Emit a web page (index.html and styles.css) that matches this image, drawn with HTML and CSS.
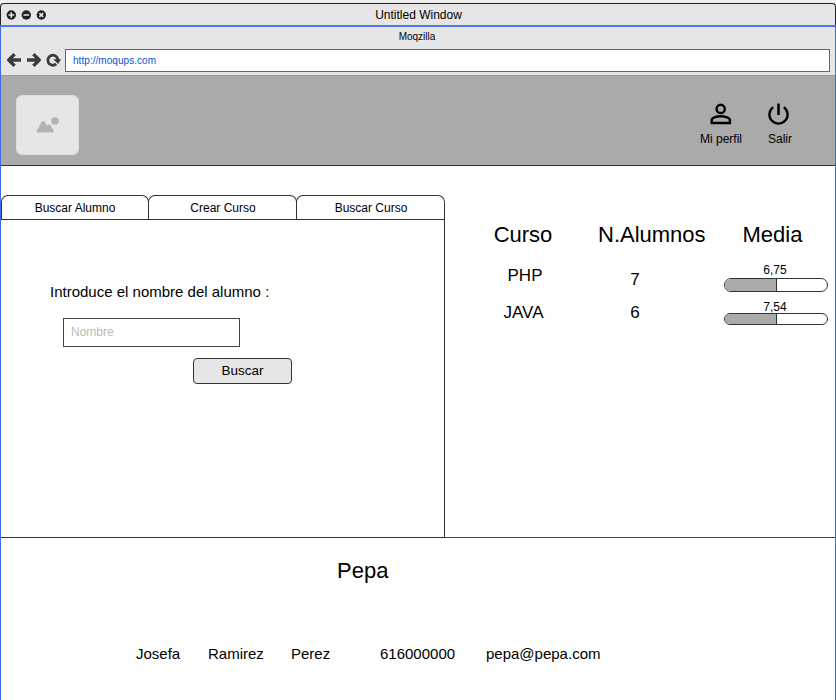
FILE: index.html
```
<!DOCTYPE html>
<html lang="es">
<head>
<meta charset="utf-8">
<title>Untitled Window</title>
<link rel="stylesheet" href="styles.css">
</head>
<body>
<div class="titlebar">
  <svg class="controls" width="42" height="12" viewBox="0 0 42 12">
    <g fill="#222">
      <circle cx="6.3" cy="6" r="4.7"/><circle cx="21.3" cy="6" r="4.7"/><circle cx="36.3" cy="6" r="4.7"/>
    </g>
    <path d="M3.5 6H9.1M6.3 3.2V8.8M18.5 6H24.1M34.4 4.1L38.2 7.9M38.2 4.1L34.4 7.9" stroke="#e6e6e6" stroke-width="1.6"/>
  </svg>
  <span class="window-title">Untitled Window</span>
</div>
<div class="browser">
  <div class="chrome">
    <div class="page-title">Moqzilla</div>
    <div class="toolbar">
      <svg class="nav" width="56" height="16" viewBox="0 0 56 16">
        <g fill="none" stroke="#3b3b3b" stroke-width="3.3" stroke-linejoin="round">
          <path d="M2.6 7H15M8.6 1.1L2.7 7L8.6 12.9"/>
          <path d="M21 7H33.4M27.4 1.1L33.3 7L27.4 12.9"/>
          <path d="M51.8 7.5A5 5 0 1 0 50.2 10.9" stroke-width="2.8"/>
        </g>
        <path d="M47.2 6.2H55L52.2 11Z" fill="#3b3b3b"/>
      </svg>
      <div class="address">http://moqups.com</div>
    </div>
  </div>
  <header class="header">
    <div class="logo">
      <svg width="24" height="17" viewBox="0 0 24 17">
        <path d="M2 15.5Q0 15.5 .8 13.8L5.2 5.5Q7 2.5 8.8 5.2L11 8.8L12 7.9Q13.7 6.8 14.8 8.6L17.6 13.5Q18.5 15.5 16.8 15.5Z" fill="#b3b3b3"/>
        <circle cx="19" cy="4" r="3.8" fill="#b3b3b3"/>
      </svg>
    </div>
    <nav class="actions">
      <div class="action profile">
        <svg width="22" height="22" viewBox="0 0 22 22" fill="none" stroke="#000" stroke-width="2.4">
          <circle cx="10.7" cy="5.9" r="4.1"/>
          <path d="M1.7 20V17C1.7 14.8 6.3 13.2 10.7 13.2S19.9 14.8 19.9 17V20Z"/>
        </svg>
        <span>Mi perfil</span>
      </div>
      <div class="action exit">
        <svg width="22" height="22" viewBox="0 0 22 22" fill="none" stroke="#000" stroke-width="2.3">
          <path d="M9.5 .5V12" stroke-width="2.5"/>
          <path d="M4.2 4.1A9.1 9.1 0 1 0 14.8 4.1"/>
        </svg>
        <span>Salir</span>
      </div>
    </nav>
  </header>
  <main class="main">
    <section class="search">
      <div class="tabs">
        <div class="tab">Buscar Alumno</div>
        <div class="tab">Crear Curso</div>
        <div class="tab">Buscar Curso</div>
      </div>
      <div class="panel">
        <label class="label" for="nombre">Introduce el nombre del alumno :</label>
        <input class="field" id="nombre" placeholder="Nombre">
        <button class="submit">Buscar</button>
      </div>
    </section>
    <section class="courses">
      <div class="heading h-course">Curso</div>
      <div class="heading h-count">N.Alumnos</div>
      <div class="heading h-avg">Media</div>
      <div class="cell php">PHP</div>
      <div class="cell count first">7</div>
      <div class="meter"><span class="score">6,75</span><div class="bar tall"><div class="fill"></div></div></div>
      <div class="cell java">JAVA</div>
      <div class="cell count">6</div>
      <div class="meter second"><span class="score">7,54</span><div class="bar"><div class="fill"></div></div></div>
    </section>
  </main>
  <section class="result">
    <h1 class="name">Pepa</h1>
    <div class="details">
      <span>Josefa</span><span>Ramirez</span><span>Perez</span><span>616000000</span><span>pepa@pepa.com</span>
    </div>
  </section>
</div>
</body>
</html>
```
FILE: styles.css
```
* { box-sizing: border-box; }
body {
  margin: 0;
  width: 836px;
  height: 700px;
  padding-top: 3px;
  overflow: hidden;
  display: flex;
  flex-direction: column;
  background: #efefef;
  color: #000;
  font: 12px/14px "Liberation Sans", Arial, sans-serif;
}
svg { display: block; flex: none; overflow: visible; }
.titlebar {
  height: 22px;
  flex: none;
  display: grid;
  grid-template-columns: 1fr auto 1fr;
  align-items: center;
  padding: 0 3px 0 4px;
  border: 1px solid #222;
  border-bottom: 0;
  border-radius: 4px 4px 0 0;
  background: #e6e6e6;
}
.browser {
  flex: 1;
  display: flex;
  flex-direction: column;
  border: 1px solid #4169e1;
  border-top: 2px solid #5075e0;
  border-bottom: 0;
  background: #fff;
}
.chrome {
  height: 48px;
  flex: none;
  padding: 3px 5px 0;
  background: #e6e6e6;
  font-size: 10px;
}
.page-title { height: 19px; text-align: center; padding-right: 2px; }
.toolbar { display: flex; align-items: center; gap: 3px; }
.address {
  flex: 1;
  height: 23px;
  padding: 4px 7px;
  border: 1px solid #666;
  background: #fff;
  color: #0057d9;
  letter-spacing: .05px;
}
.header {
  height: 91px;
  flex: none;
  display: flex;
  justify-content: space-between;
  padding: 19px 43px 0 15px;
  border-top: 1px solid #999;
  border-bottom: 1px solid #333;
  background: #aaa;
}
.logo {
  width: 63px;
  height: 60px;
  display: grid;
  place-items: center;
  border: 1px solid #ddd;
  border-radius: 6px;
  background: #e6e6e6;
}
.actions { display: flex; gap: 26px; padding-top: 8px; }
.action { display: flex; flex-direction: column; align-items: center; gap: 7px; }
.main {
  height: 372px;
  flex: none;
  display: flex;
  align-items: flex-start;
  padding-top: 29px;
  border-bottom: 1px solid #444;
}
.search { width: 444px; flex: none; }
.tabs { display: flex; height: 24px; }
.tab {
  width: 149px;
  margin-left: -1px;
  padding: 5px 0 0 1px;
  text-align: center;
  border: 1px solid #333;
  border-bottom: 0;
  border-radius: 7px 7px 0 0;
}
.tab:first-child { width: 148px; margin-left: 0; padding-left: 0; }
.panel {
  height: 319px;
  display: flex;
  flex-direction: column;
  align-items: flex-start;
  padding: 63px 0 0 49px;
  border: 1px solid #333;
  border-left: 0;
}
.label { font-size: 15px; line-height: 18px; }
.field {
  width: 177px;
  height: 29px;
  margin: 17px 0 0 13px;
  padding: 0 7px 2px;
  border: 1px solid #444;
  border-radius: 0;
  outline: 0;
  background: #fff;
  font: inherit;
}
.field::placeholder { color: #bbb; opacity: 1; }
.submit {
  width: 99px;
  height: 26px;
  margin: 11px 0 0 143px;
  padding: 0;
  border: 1px solid #333;
  border-radius: 4px;
  background: #e6e6e6;
  color: #000;
  font: 13.5px/16px "Liberation Sans", Arial, sans-serif;
}
.courses {
  display: grid;
  grid-template-columns: 156px 123px 104px;
  grid-template-rows: 42px 37px 30px;
  padding-top: 26px;
}
.heading { padding-top: 1px; font-size: 22px; line-height: 26px; text-align: center; }
.h-count { margin-left: -3px; white-space: nowrap; text-align: left; }
.h-avg { padding-right: 7px; }
.cell { padding-top: 3px; font-size: 17px; line-height: 20px; text-align: center; }
.php { padding-left: 4px; }
.java { padding-left: 1px; }
.count { padding-right: 55px; }
.first { padding-top: 7px; }
.meter { text-align: center; }
.score { display: block; padding-right: 2px; }
.bar {
  height: 12px;
  margin-top: -1px;
  overflow: hidden;
  border: 1px solid #333;
  border-radius: 7px;
}
.tall { height: 14px; margin-top: 1px; }
.fill { width: 52px; height: 100%; border-right: 1px solid #333; background: #aaa; }
.result { padding: 20px 0 0 135px; }
.name { margin: 0 0 0 201px; font-size: 22px; font-weight: 400; line-height: 26px; }
.details {
  display: grid;
  grid-template-columns: 72px 83px 89px 106px auto;
  margin-top: 61px;
  font-size: 15px;
  line-height: 18px;
}
```
